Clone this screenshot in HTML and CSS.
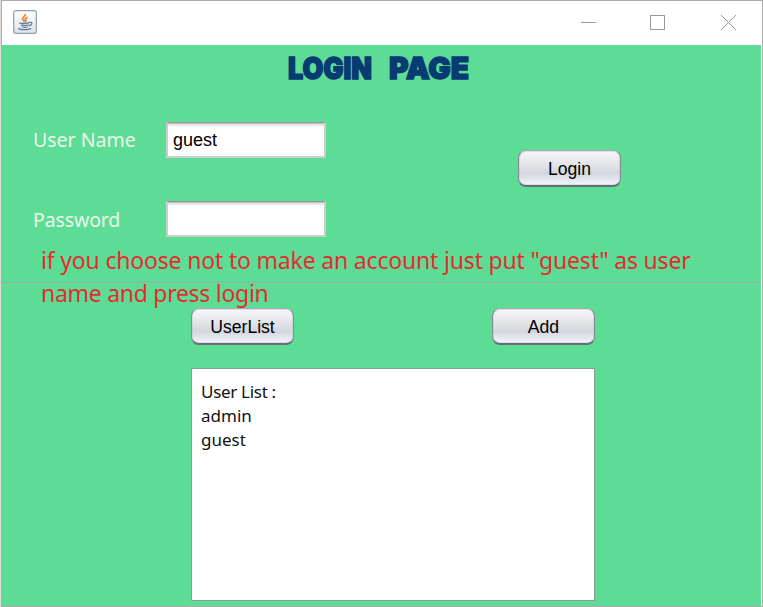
FILE: index.html
```html
<!DOCTYPE html>
<html lang="en">
<head>
<meta charset="utf-8">
<title>Login</title>
<link rel="stylesheet" href="styles.css">
</head>
<body>
<div class="window">
  <header class="titlebar">
    <svg class="java" width="24" height="24" viewBox="0 0 24 24">
      <defs><linearGradient id="tile" x1="0" y1="0" x2="0" y2="1"><stop offset="0" stop-color="#fff"/><stop offset="1" stop-color="#dce3e9"/></linearGradient></defs>
      <rect x=".7" y=".7" width="22.6" height="22.6" rx="2" fill="url(#tile)" stroke="#8ba0b2" stroke-width="1.2"/>
      <path d="M12.300 4c1 2-3.800 3.200-2.700 5.200.5 1.200 1.800 1.400 2 2.500M14.500 7.300c-3 1.200-2.500 2-1.700 3.200.4.500.2.900-.4 1.400" fill="none" stroke="#ee8330" stroke-width="1.800"/>
      <path d="M6.500 12.600c-1 1 8.500 1 10 0M8 14.700c1 .8 6.500.8 8 0M8.700 16.700c1.500.7 4.500.7 6 0M16.500 12.500c3.600-.8 3 2.800-.7 3.300M6.300 18c-3 1.800 8 2.300 12 .5" fill="none" stroke="#54799a" stroke-width="1.200"/>
    </svg>
    <svg class="controls" width="156" height="16" viewBox="0 0 156 16" fill="none" stroke="#999">
      <path d="M0 7.500h15"/>
      <rect x="69.500" y=".5" width="14" height="14"/>
      <path d="M140 0l15 15M155 0l-15 15"/>
    </svg>
  </header>
  <main class="content">
    <section class="login">
      <h1 class="title">
        <svg width="200" height="46" viewBox="-8 -10 200 46">
          <text x="1" y="23" textLength="84" lengthAdjust="spacingAndGlyphs">LOGIN</text>
          <text x="102" y="23" textLength="80" lengthAdjust="spacingAndGlyphs">PAGE</text>
        </svg>
      </h1>
      <div class="form">
        <div class="fields">
          <label class="field"><span class="caption">User Name</span><input class="box" type="text" value="guest"></label>
          <label class="field"><span class="caption password">Password</span><input class="box" type="password"></label>
        </div>
        <button class="button">Login</button>
      </div>
      <p class="hint">if you choose not to make an account just put "guest" as user<br><span class="last">name and press login</span></p>
    </section>
    <section class="users">
      <div class="actions"><button class="button">UserList</button><button class="button">Add</button></div>
      <div class="list"><span class="heading">User List :</span><br>admin<br>guest</div>
    </section>
  </main>
</div>
</body>
</html>
```

FILE: styles.css
```css
* { box-sizing: border-box; }
body { margin: 0; background: #ddd; overflow: hidden; }
.window {
  width: 762px; height: 607px; margin-left: 1px;
  border: 1px solid #aaa;
  background: #fff; padding-right: 1px;
  display: flex; flex-direction: column;
}
.titlebar {
  height: 44px; flex: none; display: flex; justify-content: space-between;
  padding: 9px 24px 0 11px;
}
.controls { margin-top: 5px; }
.content { flex: 1; min-height: 0; background: #5ddc96; margin-left: -1px; display: flex; flex-direction: column; }
.login { height: 238px; flex: none; border-bottom: 1px solid #9aaba8; }
.title { margin: 0 0 0 278px; height: 77px; padding-top: 1px; line-height: 0; }
.title text { font: 900 30px Inter, sans-serif; fill: #073b72; stroke: #073b72; stroke-width: 1.5; stroke-linejoin: miter; }
.form { display: flex; height: 115px; }
.fields { width: 516px; display: grid; row-gap: 43px; align-content: start; }
.field { display: flex; height: 36px; }
.caption {
  width: 133px; margin-left: 32px; line-height: 35px;
  font-family: "Noto Sans", sans-serif; font-size: 19.500px; color: #ecf5e9; white-space: nowrap;
}
.password { letter-spacing: -.12px; line-height: 37px; }
.box {
  width: 160px; height: 36px; padding: 2px 5px 0; background: #fff;
  border: 1px solid #bbb; border-width: 1px 2px 2px; border-color: #999 #ccc #ccc; border-radius: 0; outline: 0;
  box-shadow: inset 0 1px #bbb, inset 0 3px #e8e8e8;
  font: 18px "Liberation Sans", sans-serif; color: #000;
}
.button {
  width: 103px; height: 37px; padding: 2px 0 0; border: 1px solid #858b92;
  border-width: 1px 1px 2px; border-color: #a4aaae #858b92 #676d76; border-radius: 8px;
  background: linear-gradient(#f8f8fa, #dddfe4 50%, #d3d6de 66%, #f3f6fd);
  box-shadow: inset 0 0 0 1px #b9bec566;
  font: 17.600px "Liberation Sans", sans-serif; color: #000;
}
.form .button { margin: 28px 0 0 1px; padding-top: 3px; }
.hint {
  margin: 7px 0 0 40px; font: 23px/33px "Noto Sans", sans-serif; letter-spacing: -.18px;
  color: #e42c30; white-space: nowrap; position: relative;
}
.last { letter-spacing: -.28px; }
.users { flex: 1; padding: 25px 0 0 190px; }
.actions { width: 404px; display: flex; justify-content: space-between; }
.list {
  width: 404px; height: 233px; margin-top: 23px; padding: 11px 9px;
  background: #fff; border: 1px solid #829f98;
  font: 17px/24px "Noto Sans", sans-serif; color: #111;
}
.heading { letter-spacing: -.3px; }
```
